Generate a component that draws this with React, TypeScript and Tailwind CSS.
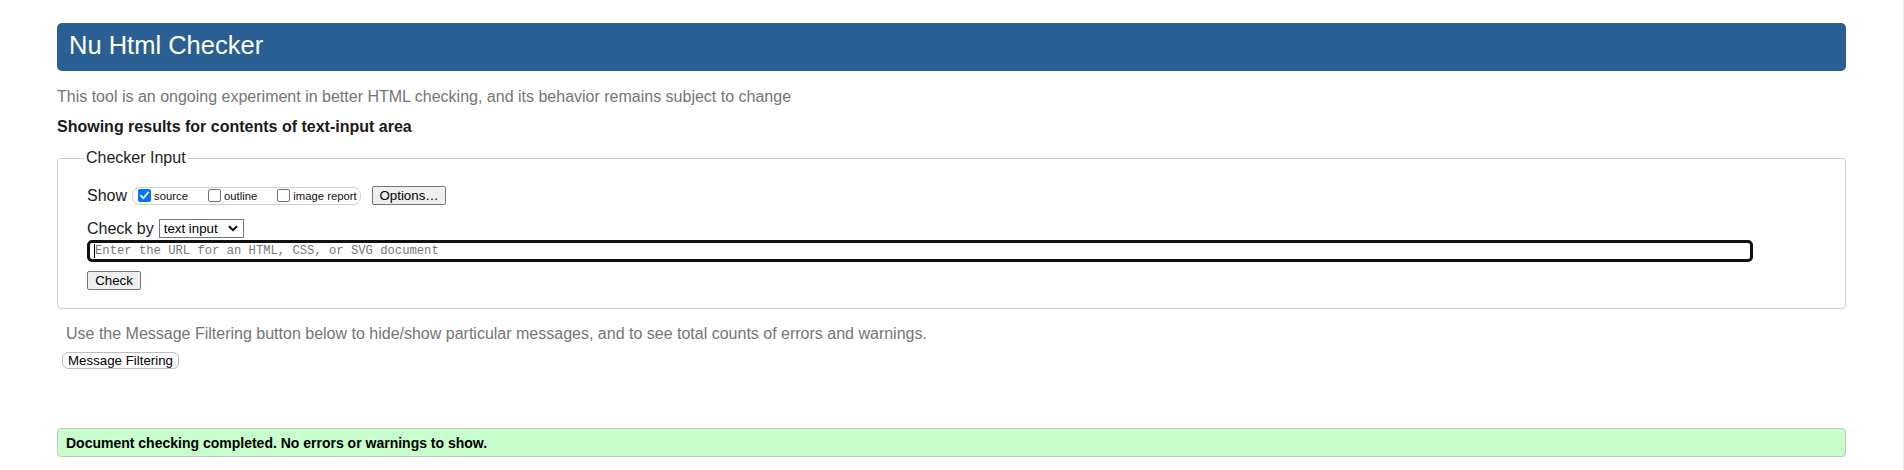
import React from 'react'

const Box = ({ checked, label }: { checked?: boolean; label: string }) => (
  <label className="flex items-center gap-[3px]">
    {checked ? (
      <span className="flex h-[13px] w-[13px] items-center justify-center rounded-[2px] bg-[#0075ff]">
        <svg width="11" height="11" viewBox="0 0 11 11" fill="none">
          <path d="M2 5.8 L4.4 8.2 L9 2.6" stroke="#fff" strokeWidth="1.8" strokeLinecap="square" />
        </svg>
      </span>
    ) : (
      <span className="h-[13px] w-[13px] rounded-[2px] border border-[#767676] bg-white" />
    )}
    <span className="pt-[2px] text-[11.3px] leading-[13px] text-[#111]">{label}</span>
  </label>
)

const NativeButton = ({ children, className }: { children: React.ReactNode; className: string }) => (
  <button
    className={`flex items-center justify-center border text-[13.3px] leading-[15px] text-black ${className}`}
  >
    {children}
  </button>
)

const App = () => {
  return (
    <div
      className="h-[470px] w-full overflow-hidden border-r border-[#ececec] bg-white pl-[57px]"
      style={{ fontFamily: '"Liberation Sans", Arial, sans-serif' }}
    >
      <div className="w-[1789px]">
        {/* header */}
        <div className="mt-[23px] flex h-[48px] items-center rounded-[5px] bg-[#295f92] pb-[3px] pl-[12px]">
          <h1 className="text-[25.5px] leading-[25px] text-white">Nu Html Checker</h1>
        </div>

        <p className="mt-[17px] text-[16px] leading-[18px] text-[#757575]">
          This tool is an ongoing experiment in better HTML checking, and its behavior remains subject to change
        </p>
        <p className="mt-[12px] text-[16px] font-bold leading-[18px] text-[#1a1a1a]">
          Showing results for contents of text-input area
        </p>

        {/* checker input */}
        <fieldset className="mt-[13px] rounded-[4px] border border-[#cccccc]">
          <legend className="ml-[26px] px-[2px] text-[16px] leading-[18px] text-[#222]">Checker Input</legend>
          <div className="pb-[18px] pl-[29px]">
            <div className="mt-[19px] flex h-[19px] items-center">
              <span className="text-[16px] leading-[18px] text-[#1a1a1a]">Show</span>
              <div className="ml-[5px] flex h-[18px] w-[229px] items-center gap-[20px] rounded-[8px] border border-[#cfcfcf] pl-[5px]">
                <Box checked label="source" />
                <Box label="outline" />
                <Box label="image report" />
              </div>
              <NativeButton className="ml-[11px] h-[19px] w-[74px] rounded-[2px] border-[#767676] bg-[#efefef]">
                Options…
              </NativeButton>
            </div>

            <div className="mt-[14px] flex h-[19px] items-center">
              <span className="text-[16px] leading-[18px] text-[#1a1a1a]">Check by</span>
              <div className="ml-[5px] flex h-[19px] w-[85px] items-center justify-between border border-[#767676] bg-white pl-[4px] pr-[5px]">
                <span className="text-[13.3px] leading-[15px] text-black">text input</span>
                <svg width="10" height="7" viewBox="0 0 10 7" fill="none">
                  <path d="M1 1.2 L5 5.2 L9 1.2" stroke="#000" strokeWidth="2" />
                </svg>
              </div>
            </div>

            <div className="relative mt-[2px] h-[22px] w-[1666px] rounded-[5px] border-[3px] border-[#101010] bg-white">
              <span className="absolute left-[4px] top-[1px] h-[14px] w-px bg-black" />
              <input
                className="block h-[16px] w-full py-0 pl-[5px] text-[12.2px] leading-[16px] text-black outline-none placeholder:text-[#767676]"
                style={{ fontFamily: '"Liberation Mono", "DejaVu Sans Mono", monospace' }}
                placeholder="Enter the URL for an HTML, CSS, or SVG document"
              />
            </div>

            <NativeButton className="mt-[9px] h-[19px] w-[54px] rounded-[2px] border-[#767676] bg-[#efefef]">
              Check
            </NativeButton>
          </div>
        </fieldset>

        <p className="ml-[9px] mt-[16px] text-[16px] leading-[18px] text-[#757575]">
          Use the Message Filtering button below to hide/show particular messages, and to see total counts of errors and warnings.
        </p>
        <NativeButton className="ml-[5px] mt-[9px] h-[17px] w-[117px] rounded-[6px] border-[#bdbdbd] bg-white">
          Message Filtering
        </NativeButton>

        <div className="mt-[59px] flex h-[29px] items-center rounded-[4px] border border-[#c4c4c4] bg-[#c6fecc] pl-[8px]">
          <p className="text-[14px] font-bold leading-[16px] text-black">
            Document checking completed. No errors or warnings to show.
          </p>
        </div>
      </div>
    </div>
  )
}

export default App
